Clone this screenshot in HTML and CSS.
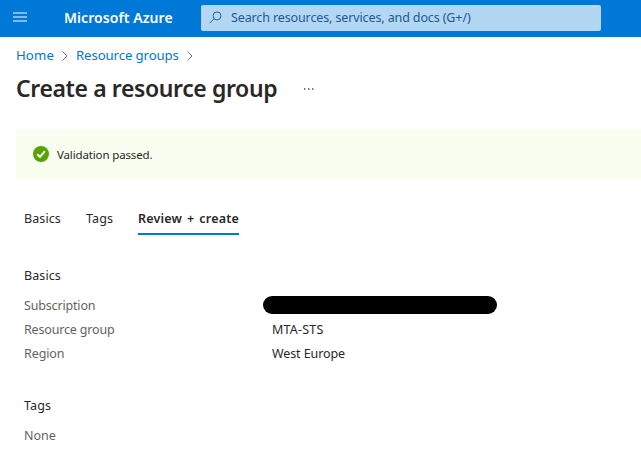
FILE: index.html
```html
<!DOCTYPE html>
<html lang="en">
<head>
<meta charset="utf-8">
<title>Create a resource group - Microsoft Azure</title>
<link rel="stylesheet" href="styles.css">
</head>
<body>
<header class="topbar">
  <svg class="menu-icon" width="14" height="10" viewBox="0 0 14 10"><path d="M0 1h14M0 5h14M0 9h14"/></svg>
  <span class="brand">Microsoft Azure</span>
  <div class="search">
    <svg class="search-icon" width="13" height="13" viewBox="0 0 13 13"><circle cx="8" cy="4.9" r="4"/><path d="M5.1 7.7L.6 12.2"/></svg>
    <span class="search-text">Search resources, services, and docs (G+/)</span>
  </div>
</header>
<main>
  <nav class="crumbs">
    <a class="crumb home">Home</a>
    <svg class="chevron" width="6" height="10" viewBox="0 0 6 10"><path d="M.5.5L5 5L.5 9.5"/></svg>
    <a class="crumb groups">Resource groups</a>
    <svg class="chevron" width="6" height="10" viewBox="0 0 6 10"><path d="M.5.5L5 5L.5 9.5"/></svg>
  </nav>
  <div class="heading">
    <h1>Create a resource group</h1>
    <svg class="more" width="12" height="2" viewBox="0 0 12 2"><path d="M1 0h1.4v2H1zM5 0h1.4v2H5zM9 0h1.4v2H9z"/></svg>
  </div>
  <div class="notice">
    <svg width="16" height="16" viewBox="0 0 16 16"><circle cx="8" cy="8" r="8" fill="#57a300"/><path d="M4.2 8.2L7 10.9L11.9 5.2" fill="none" stroke="#fff" stroke-width="1.9"/></svg>
    <span class="notice-text">Validation passed.</span>
  </div>
  <nav class="tabs">
    <span class="tab basics">Basics</span>
    <span class="tab tags">Tags</span>
    <span class="tab active">Review + create</span>
  </nav>
  <section class="summary">
    <h2 class="basics">Basics</h2>
    <dl>
      <dt class="subscription">Subscription</dt><dd><span class="redacted"></span></dd>
      <dt class="group">Resource group</dt><dd class="group-name">MTA-STS</dd>
      <dt class="region">Region</dt><dd class="region-name">West Europe</dd>
    </dl>
    <h2 class="tags">Tags</h2>
    <p class="none">None</p>
  </section>
</main>
</body>
</html>
```
FILE: styles.css
```css
* { box-sizing: border-box; }
body {
  margin: 0;
  background: #fff;
  color: #292827;
  font: 12.5px/20px "Noto Sans", "Open Sans", sans-serif;
  white-space: nowrap;
  overflow: hidden;
}
svg { display: block; flex: none; }
h1, h2, p, dl, dd { margin: 0; }

.topbar {
  display: flex;
  align-items: center;
  height: 37px;
  padding: 0 0 3px 13px;
  background: #0078d7;
}
.menu-icon { fill: none; stroke: #80bbeb; stroke-width: 2; }
.brand {
  width: 137px;
  margin: 1px 0 0 37px;
  color: #fff;
  font-size: 14px;
  font-weight: 600;
  letter-spacing: .07px;
}
.search {
  display: flex;
  align-items: center;
  width: 400px;
  height: 26px;
  margin-top: 1px;
  padding-left: 8px;
  border-radius: 2px;
  background: #b3d6f3;
  color: #1a5a94;
}
.search-icon { fill: none; stroke: #25629b; stroke-width: 1; }
.search-text { margin-left: 9px; letter-spacing: -.12px; }

.crumbs {
  display: flex;
  align-items: center;
  height: 20px;
  margin: 8px 0 0 16px;
  color: #0078d4;
  font-size: 13.2px;
}
.crumb.home { width: 46px; letter-spacing: .1px; }
.crumb.groups { width: 111px; margin-left: 8px; letter-spacing: -.1px; }
.chevron { margin-top: 2px; fill: none; stroke: #777; stroke-width: 1; }

.heading { display: flex; align-items: center; height: 32px; margin: 7px 0 0 16px; }
h1 { width: 287px; font-size: 23px; font-weight: 600; line-height: 32px; letter-spacing: -.39px; }
.more { margin-top: 2px; fill: #777; }

.notice {
  display: flex;
  align-items: center;
  height: 50px;
  margin: 25px 0 0 16px;
  padding-left: 17px;
  border-radius: 2px 0 0 2px;
  background: #f8fff0;
}
.notice-text { margin: 1px 0 0 8px; font-size: 11.5px; letter-spacing: -.14px; }

.tabs { display: flex; height: 26px; margin: 30px 0 0 24px; }
.tab.basics { width: 62px; letter-spacing: .1px; }
.tab.tags { width: 52px; letter-spacing: .1px; }
.tab.active {
  width: 101px;
  border-bottom: 2px solid #0078d4;
  font-weight: 600;
  letter-spacing: .2px;
  word-spacing: 1.5px;
}

.summary { padding: 31px 0 0 24px; }
h2 { font-size: 12.5px; font-weight: 400; line-height: 20px; letter-spacing: .1px; }
dl {
  display: grid;
  grid-template-columns: 248px 1fr;
  grid-auto-rows: 24px;
  margin: 8px 0 30px;
  line-height: 24px;
}
dt, .none { color: #64625f; }
.subscription, .group { letter-spacing: -.17px; }
.region, .region-name { letter-spacing: -.1px; }
.group-name { letter-spacing: .2px; }
.redacted {
  display: block;
  width: 234px;
  height: 18px;
  margin: 2px 0 0 -9px;
  border-radius: 9px;
  background: #000;
}
.none { margin-top: 10px; }
```
